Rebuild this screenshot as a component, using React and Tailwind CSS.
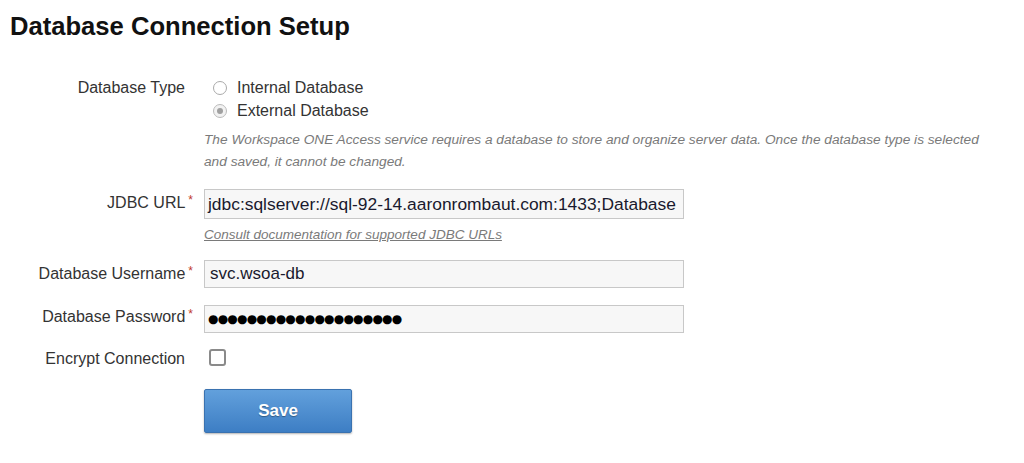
export default function App() {
  const font = { fontFamily: '"Liberation Sans", Arial, sans-serif' };
  const Star = () => <span className="ml-[3px] text-[12px] text-[#c0392b] align-top relative top-[-2px]">*</span>;
  return (
    <div className="w-[1024px] h-[463px] bg-white text-[#333]" style={font}>
      <h1 className="pl-[10px] pt-[11px] text-[25.6px] leading-[30px] font-bold text-[#111]">Database Connection Setup</h1>
      <div className="mt-[35px] grid grid-cols-[193px_1fr] gap-x-[11px]">
        {/* Database Type */}
        <div className="text-right text-[16px] leading-[23px] pr-[8px]">Database Type</div>
        <div className="text-[16px] leading-[23px]">
          <div className="flex items-center">
            <span className="ml-[9px] w-[14px] h-[14px] rounded-full border border-[#aaa] bg-white"></span>
            <span className="ml-[10px]">Internal Database</span>
          </div>
          <div className="flex items-center">
            <span className="ml-[9px] w-[14px] h-[14px] rounded-full border border-[#bbb] bg-[#f2f2f2] flex items-center justify-center">
              <span className="w-[6px] h-[6px] rounded-full bg-[#a0a0a0]"></span>
            </span>
            <span className="ml-[10px]">External Database</span>
          </div>
          <p className="mt-[7px] text-[13.7px] leading-[22px] italic text-[#7a7a7a] pr-[30px]">
            The Workspace ONE Access service requires a database to store and organize server data. Once the database type is selected and saved, it cannot be changed.
          </p>
        </div>

        {/* JDBC URL */}
        <div className="mt-[18px] text-right text-[16px] leading-[23px]">JDBC URL<Star /></div>
        <div className="mt-[16px]">
          <div className="w-[480px] h-[30px] border border-[#c8c8c8] bg-[#f7f7f7] px-[3px] text-[17.4px] leading-[28px] text-[#1a1a2e] overflow-hidden whitespace-nowrap">jdbc:sqlserver://sql-92-14.aaronrombaut.com:1433;Database</div>
          <div className="mt-[8px] text-[13.5px] leading-[16px] italic underline text-[#7a7a7a]">Consult documentation for supported JDBC URLs</div>
        </div>

        {/* Username */}
        <div className="mt-[19px] text-right text-[16px] leading-[23px]">Database Username<Star /></div>
        <div className="mt-[17px]">
          <div className="w-[480px] h-[28px] border border-[#c8c8c8] bg-[#f7f7f7] px-[5px] text-[17px] leading-[26px] text-[#1a1a2e]">svc.wsoa-db</div>
        </div>

        {/* Password */}
        <div className="mt-[17px] text-right text-[16px] leading-[23px]">Database Password<Star /></div>
        <div className="mt-[17px]">
          <div className="w-[480px] h-[28px] border border-[#c8c8c8] bg-[#f7f7f7] px-[3px] text-[12px] leading-[26px] text-black tracking-[-0.8px]" style={{ fontFamily: '"DejaVu Sans", sans-serif' }}>●●●●●●●●●●●●●●●●●●●●</div>
        </div>

        {/* Encrypt */}
        <div className="mt-[14px] text-right text-[16px] leading-[23px] pr-[8px]">Encrypt Connection</div>
        <div className="mt-[16px] flex">
          <span className="ml-[5px] w-[17px] h-[17px] rounded-[3px] border-2 border-[#8a8a8a] bg-white"></span>
        </div>

        {/* Save */}
        <div></div>
        <div className="mt-[19px]">
          <button className="w-[148px] h-[44px] rounded-[2px] border border-[#3a72b0] bg-gradient-to-b from-[#62a0dc] to-[#3d7ec4] text-white text-[17px] font-bold shadow-[0_1px_2px_rgba(0,0,0,0.3)] [text-shadow:0_1px_1px_rgba(0,0,0,0.35)]">Save</button>
        </div>
      </div>
    </div>
  );
}
